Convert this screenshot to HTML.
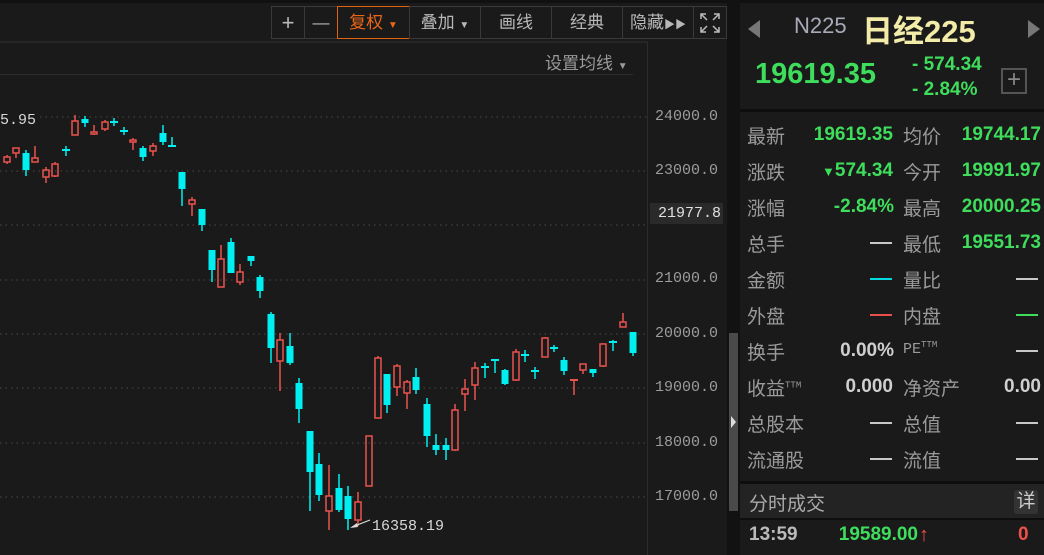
<!DOCTYPE html>
<html><head><meta charset="utf-8"><style>
*{margin:0;padding:0;box-sizing:border-box}
body{width:1044px;height:555px;background:#1a1a1a;overflow:hidden;position:relative;font-family:"Liberation Sans","Noto Sans CJK SC",sans-serif;color:#9a9a9a}
.abs{position:absolute}
.tb{position:absolute;top:6px;height:33px;border:1px solid #3a3a3a;color:#b8b8b8;font-size:17px;text-align:center;line-height:31px}
.ax{position:absolute;left:655px;font-family:"Liberation Mono",monospace;font-size:15px;color:#9c9c9c}
.lb{position:absolute;font-size:19px;color:#9a9a9a}
.gv{position:absolute;font-size:19px;font-weight:bold;color:#3fdd5c;text-align:right;font-family:"Liberation Sans",sans-serif}
.wv{position:absolute;font-size:19px;font-weight:bold;color:#cfcfcf;text-align:right}
.dash{position:absolute;height:2px;width:22px}
</style></head><body>
<div class="abs" style="left:0;top:0;width:740px;height:3px;background:#111"></div>
<div class="abs" style="left:0;top:41px;width:648px;height:2px;background:#262626"></div>
<div class="abs" style="left:0;top:74px;width:633px;height:1px;background:#2c2c2c"></div>
<div class="abs" style="left:647px;top:42px;width:1px;height:513px;background:#2c2c2c"></div>
<div class="abs" style="left:727px;top:0;width:13px;height:555px;background:#121212"></div>
<div class="abs" style="left:729px;top:333px;width:9px;height:178px;background:#4a4a4a"></div>
<div class="abs" style="left:731px;top:416px;width:0;height:0;border-top:6px solid transparent;border-bottom:6px solid transparent;border-left:5px solid #ddd"></div>

<div class="tb" style="left:271px;width:34px;font-size:22px">+</div>
<div class="tb" style="left:304px;width:34px">—</div>
<div class="tb" style="left:337px;width:73px;border-color:#e0620f;color:#e8661a">复权 <span style="font-size:10px">▼</span></div>
<div class="tb" style="left:409px;width:72px">叠加 <span style="font-size:10px">▼</span></div>
<div class="tb" style="left:480px;width:72px">画线</div>
<div class="tb" style="left:551px;width:72px">经典</div>
<div class="tb" style="left:622px;width:72px">隐藏<span style="font-size:11px">▶▶</span></div>
<div class="tb" style="left:693px;width:34px">
<svg width="24" height="24" viewBox="0 0 24 24" style="margin-top:4px" fill="none" stroke="#bbb" stroke-width="1.5"><path d="M3 8V3h5M3 3l6 6M21 8V3h-5M21 3l-6 6M3 16v5h5M3 21l6-6M21 16v5h-5M21 21l-6-6"/></svg></div>
<div class="abs" style="left:545px;top:49px;font-size:17px;color:#9a9a9a">设置均线 <span style="font-size:10px">▼</span></div>

<svg class="abs" style="left:0;top:0" width="648" height="555">
<g stroke="#3a3a3a" stroke-width="1.5" stroke-dasharray="1.5 4">
<line x1="40" y1="117" x2="648" y2="117"/><line x1="0" y1="171" x2="648" y2="171"/><line x1="0" y1="225" x2="648" y2="225"/><line x1="0" y1="280" x2="648" y2="280"/><line x1="0" y1="334" x2="648" y2="334"/><line x1="0" y1="388" x2="648" y2="388"/><line x1="0" y1="443" x2="648" y2="443"/><line x1="0" y1="497" x2="648" y2="497"/>
</g>
<g id="c"></g>
<text x="0" y="124" font-family="Liberation Mono,monospace" font-size="15" fill="#d8d8d8">5.95</text>
<path d="M352 527 L370 520" stroke="#ddd" stroke-width="1.2"/><path d="M350 528 l7 -5 l1 4z" fill="#ddd"/>
<text x="372" y="530" font-family="Liberation Mono,monospace" font-size="15" fill="#d8d8d8">16358.19</text>
</svg>
<script>
var d=[[7,157,162,155,164,'r'],[16,148,153,148,158,'r'],[26,153,170,150,176,'c'],[35,158,162,146,162,'r'],[46,170,177,167,183,'r'],[55,164,176,162,177,'r'],[66,150,150,146,156,'c'],[75,121,135,115,135,'r'],[85,119,123,116,127,'c'],[94,132,134,125,135,'r'],[105,122,129,120,131,'r'],[114,122,122,118,126,'c'],[124,131,131,127,135,'c'],[133,140,142,138,150,'r'],[143,148,157,146,161,'c'],[153,146,151,143,156,'r'],[163,133,142,125,145,'c'],[172,146,146,137,146,'c'],[182,172,189,172,206,'c'],[192,200,204,197,216,'r'],[202,209,225,209,231,'c'],[212,250,270,250,282,'c'],[221,259,287,245,287,'r'],[231,242,273,238,273,'c'],[240,272,282,264,285,'r'],[251,256,261,256,266,'c'],[260,277,291,275,298,'c'],[271,314,348,312,363,'c'],[280,340,361,333,391,'r'],[290,346,363,333,365,'c'],[299,383,409,378,423,'c'],[310,431,472,431,511,'c'],[319,464,495,453,501,'c'],[329,496,511,465,530,'r'],[339,488,510,474,512,'c'],[348,496,519,486,530,'c'],[358,502,520,492,526,'r'],[369,436,486,436,486,'r'],[378,358,418,356,418,'r'],[387,374,405,374,413,'c'],[397,366,387,364,396,'r'],[407,382,393,380,409,'r'],[416,377,390,368,394,'c'],[427,404,436,398,447,'c'],[436,445,450,434,455,'c'],[446,445,450,438,460,'c'],[455,410,450,404,451,'r'],[465,389,394,379,411,'r'],[475,368,385,362,400,'r'],[485,367,367,363,378,'c'],[495,360,360,360,373,'c'],[505,370,384,369,385,'c'],[516,352,380,349,381,'r'],[525,355,355,350,362,'c'],[535,371,371,367,379,'c'],[545,338,357,337,357,'r'],[554,348,348,345,352,'c'],[564,360,371,357,375,'c'],[574,380,380,380,395,'r'],[583,364,370,364,374,'r'],[593,369,373,369,377,'c'],[603,344,366,343,367,'r'],[613,342,342,340,351,'c'],[623,322,327,313,327,'r'],[633,332,353,332,356,'c']];
var s='';d.forEach(function(k){var x=k[0],bt=k[1],bb=k[2],wt=k[3],wb=k[4],col=k[5]=='r'?'#ea524c':'#00f0f2';
if(bt==bb){s+='<line x1="'+x+'" y1="'+wt+'" x2="'+x+'" y2="'+wb+'" stroke="'+col+'" stroke-width="1.5"/><line x1="'+(x-4)+'" y1="'+bt+'" x2="'+(x+4)+'" y2="'+bt+'" stroke="'+col+'" stroke-width="2"/>';}
else if(k[5]=='r'){s+='<line x1="'+x+'" y1="'+wt+'" x2="'+x+'" y2="'+bt+'" stroke="'+col+'" stroke-width="1.5"/><line x1="'+x+'" y1="'+bb+'" x2="'+x+'" y2="'+wb+'" stroke="'+col+'" stroke-width="1.5"/><rect x="'+(x-3)+'" y="'+bt+'" width="6" height="'+(bb-bt)+'" fill="none" stroke="'+col+'" stroke-width="1.5"/>';}
else{s+='<line x1="'+x+'" y1="'+wt+'" x2="'+x+'" y2="'+wb+'" stroke="'+col+'" stroke-width="1.5"/><rect x="'+(x-3.5)+'" y="'+bt+'" width="7" height="'+(bb-bt)+'" fill="'+col+'"/>';}});
document.getElementById('c').innerHTML=s;
</script>

<div class="ax" style="top:108px">24000.0</div>
<div class="ax" style="top:162px">23000.0</div>
<div class="ax" style="top:270px">21000.0</div>
<div class="ax" style="top:325px">20000.0</div>
<div class="ax" style="top:379px">19000.0</div>
<div class="ax" style="top:434px">18000.0</div>
<div class="ax" style="top:488px">17000.0</div>
<div class="abs" style="left:650px;top:203px;width:73px;height:21px;background:#2a2a2a;color:#e0e0e0;font-family:'Liberation Mono',monospace;font-size:15px;line-height:21px;text-align:right;padding-right:2px">21977.8</div>

<!-- right panel -->
<div class="abs" style="left:740px;top:0;width:304px;height:555px;background:#1a1a1a"></div>
<div class="abs" style="left:740px;top:0;width:304px;height:3px;background:#111"></div>
<div class="abs" style="left:748px;top:20px;width:0;height:0;border-top:9px solid transparent;border-bottom:9px solid transparent;border-right:12px solid #777"></div>
<div class="abs" style="left:1028px;top:20px;width:0;height:0;border-top:9px solid transparent;border-bottom:9px solid transparent;border-left:12px solid #777"></div>
<div class="abs" style="left:794px;top:13px;font-size:22px;color:#a8aab8">N225</div>
<div class="abs" style="left:862px;top:6px;font-size:31px;color:#f2eca8;font-weight:bold">日经225</div>
<div class="abs" style="left:755px;top:58px;font-size:29px;font-weight:bold;color:#3fdd5c">19619.35</div>
<div class="abs" style="left:912px;top:52px;font-size:19px;font-weight:bold;color:#3fdd5c;line-height:25px">- 574.34<br>- 2.84%</div>
<div class="abs" style="left:1001px;top:68px;width:26px;height:26px;border:2px solid #555;color:#888;font-size:24px;line-height:20px;text-align:center">+</div>
<div class="abs" style="left:740px;top:109px;width:304px;height:3px;background:#0e0e0e"></div>

<div class="lb" style="left:747px;top:122px">最新</div><div class="gv" style="left:800px;top:124px;width:93px">19619.35</div>
<div class="lb" style="left:903px;top:122px">均价</div><div class="gv" style="left:945px;top:124px;width:96px">19744.17</div>
<div class="lb" style="left:747px;top:158px">涨跌</div><div class="gv" style="left:800px;top:160px;width:93px"><span style="font-size:13px">▼</span>574.34</div>
<div class="lb" style="left:903px;top:158px">今开</div><div class="gv" style="left:945px;top:160px;width:96px">19991.97</div>
<div class="lb" style="left:747px;top:194px">涨幅</div><div class="gv" style="left:800px;top:196px;width:94px">-2.84%</div>
<div class="lb" style="left:903px;top:194px">最高</div><div class="gv" style="left:945px;top:196px;width:96px">20000.25</div>
<div class="lb" style="left:747px;top:230px">总手</div><div class="dash" style="left:870px;top:242px;background:#c8c8c8"></div>
<div class="lb" style="left:903px;top:230px">最低</div><div class="gv" style="left:945px;top:232px;width:96px">19551.73</div>
<div class="lb" style="left:747px;top:266px">金额</div><div class="dash" style="left:870px;top:278px;background:#00d8e0"></div>
<div class="lb" style="left:903px;top:266px">量比</div><div class="dash" style="left:1016px;top:278px;background:#c8c8c8"></div>
<div class="lb" style="left:747px;top:302px">外盘</div><div class="dash" style="left:870px;top:314px;background:#e8504a"></div>
<div class="lb" style="left:903px;top:302px">内盘</div><div class="dash" style="left:1016px;top:314px;background:#3fdd5c"></div>
<div class="lb" style="left:747px;top:338px">换手</div><div class="wv" style="left:800px;top:340px;width:94px">0.00%</div>
<div class="lb" style="left:903px;top:340px;font-size:15px;font-family:'Liberation Mono',monospace">PE<sup style="font-size:9px">TTM</sup></div><div class="dash" style="left:1016px;top:350px;background:#c8c8c8"></div>
<div class="lb" style="left:747px;top:374px">收益<sup style="font-size:9px;font-family:'Liberation Mono',monospace">TTM</sup></div><div class="wv" style="left:800px;top:376px;width:93px">0.000</div>
<div class="lb" style="left:903px;top:374px">净资产</div><div class="wv" style="left:945px;top:376px;width:96px">0.00</div>
<div class="lb" style="left:747px;top:410px">总股本</div><div class="dash" style="left:870px;top:422px;background:#c8c8c8"></div>
<div class="lb" style="left:903px;top:410px">总值</div><div class="dash" style="left:1016px;top:422px;background:#c8c8c8"></div>
<div class="lb" style="left:747px;top:446px">流通股</div><div class="dash" style="left:870px;top:458px;background:#c8c8c8"></div>
<div class="lb" style="left:903px;top:446px">流值</div><div class="dash" style="left:1016px;top:458px;background:#c8c8c8"></div>

<div class="abs" style="left:740px;top:481px;width:304px;height:3px;background:#0e0e0e"></div>
<div class="abs" style="left:740px;top:484px;width:304px;height:34px;background:#232323"></div>
<div class="lb" style="left:749px;top:489px;color:#aaa">分时成交</div>
<div class="abs" style="left:1014px;top:490px;width:24px;height:24px;background:#333;border-radius:3px;color:#ccc;font-size:19px;line-height:23px;text-align:center">详</div>
<div class="abs" style="left:740px;top:518px;width:304px;height:2px;background:#0e0e0e"></div>
<div class="wv" style="left:749px;top:524px;text-align:left;color:#bbb">13:59</div>
<div class="gv" style="left:820px;top:524px;width:98px">19589.00</div>
<div class="abs" style="left:919px;top:524px;font-size:20px;font-weight:bold;color:#f0504a">↑</div>
<div class="abs" style="left:1018px;top:524px;font-size:19px;font-weight:bold;color:#f0504a">0</div>
</body></html>
